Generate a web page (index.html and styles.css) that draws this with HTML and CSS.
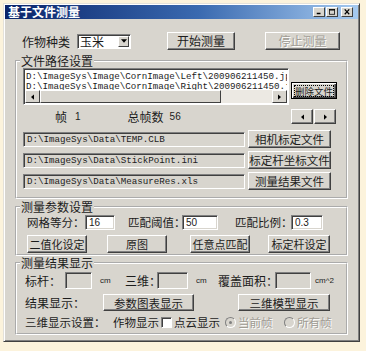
FILE: index.html
```html
<!DOCTYPE html>
<html lang="zh-CN">
<head>
<meta charset="UTF-8" />
<title>基于文件测量</title>
<link rel="stylesheet" href="styles.css">
</head>
<body>

<!-- Dialog window -->
<div class="window">
  <div class="titlebar">
    <span class="title">基于文件测量</span>
    <div class="caption-btns">
      <span class="cap-btn"><svg viewBox="0 0 10 8"><rect x="2" y="5" width="5" height="2" fill="#000"/></svg></span>
      <span class="cap-btn"><svg viewBox="0 0 10 8"><rect x="1.5" y="0.5" width="7" height="6.5" fill="none" stroke="#000"/><rect x="1.5" y="0.5" width="7" height="1.5" fill="#000"/></svg></span>
      <span class="cap-btn cap-close"><svg viewBox="0 0 10 8"><path d="M2 0.5 L8 7 M8 0.5 L2 7" stroke="#000" stroke-width="1.6"/></svg></span>
    </div>
  </div>

  <div class="client">
    <!-- Crop type and start / stop -->
    <div class="row-top">
      <span class="label lbl-crop">作物种类</span>
      <div class="combo">
        <span class="combo-text">玉米</span>
        <span class="combo-arrow"><svg viewBox="0 0 7 4"><path d="M0 0 H7 L3.5 4 Z" fill="#000"/></svg></span>
      </div>
      <button class="btn btn-start">开始测量</button>
      <button class="btn btn-stop" disabled>停止测量</button>
    </div>

    <!-- File paths -->
    <fieldset class="group group-path">
      <legend>文件路径设置</legend>
      <div class="list-row">
        <div class="listbox">
          <div class="list-lines">
            <div>D:\ImageSys\Image\CornImage\Left\200906211450.jpg</div>
            <div>D:\ImageSys\Image\CornImage\Right\200906211450.jpg</div>
          </div>
          <div class="hscroll">
            <span class="sb-btn"><svg viewBox="0 0 4 7"><path d="M4 0 V7 L0 3.5 Z" fill="#000"/></svg></span>
            <span class="sb-thumb"></span>
            <span class="sb-track"></span>
            <span class="sb-btn"><svg viewBox="0 0 4 7"><path d="M0 0 V7 L4 3.5 Z" fill="#000"/></svg></span>
          </div>
        </div>
        <button class="btn btn-delete"><span class="focus-rect">删除文件</span></button>
      </div>

      <div class="frame-row">
        <span class="label lbl-frame">帧</span>
        <span class="label lbl-frame-no">1</span>
        <span class="label lbl-total">总帧数</span>
        <span class="label lbl-total-no">56</span>
        <div class="frame-nav">
          <button class="btn btn-arrow"><svg viewBox="0 0 4 7"><path d="M4 0 V7 L0 3.5 Z" fill="#000"/></svg></button>
          <button class="btn btn-arrow"><svg viewBox="0 0 4 7"><path d="M0 0 V7 L4 3.5 Z" fill="#000"/></svg></button>
        </div>
      </div>

      <div class="path-row">
        <div class="edit edit-path">D:\ImageSys\Data\TEMP.CLB</div>
        <button class="btn btn-path">相机标定文件</button>
      </div>
      <div class="path-row">
        <div class="edit edit-path">D:\ImageSys\Data\StickPoint.ini</div>
        <button class="btn btn-path">标定杆坐标文件</button>
      </div>
      <div class="path-row">
        <div class="edit edit-path">D:\ImageSys\Data\MeasureRes.xls</div>
        <button class="btn btn-path">测量结果文件</button>
      </div>
    </fieldset>

    <!-- Measurement parameters -->
    <fieldset class="group group-param">
      <legend>测量参数设置</legend>
      <div class="param-row">
        <span class="label lbl-grid">网格等分：</span>
        <div class="edit edit-white edit-grid">16</div>
        <span class="label lbl-thresh">匹配阈值：</span>
        <div class="edit edit-white edit-thresh">50</div>
        <span class="label lbl-ratio">匹配比例：</span>
        <div class="edit edit-white edit-ratio">0.3</div>
      </div>
      <div class="param-btns">
        <button class="btn btn-p1">二值化设定</button>
        <button class="btn btn-p2">原图</button>
        <button class="btn btn-p3">任意点匹配</button>
        <button class="btn btn-p4">标定杆设定</button>
      </div>
    </fieldset>

    <!-- Results -->
    <fieldset class="group group-result">
      <legend>测量结果显示</legend>
      <div class="result-row">
        <span class="label lbl-pole">标杆：</span>
        <div class="edit edit-pole"></div>
        <span class="unit unit-1">cm</span>
        <span class="label lbl-3d">三维：</span>
        <div class="edit edit-3d"></div>
        <span class="unit unit-2">cm</span>
        <span class="label lbl-area">覆盖面积：</span>
        <div class="edit edit-area"></div>
        <span class="unit unit-3">cm^2</span>
      </div>
      <div class="show-row">
        <span class="label lbl-show">结果显示：</span>
        <button class="btn btn-chart">参数图表显示</button>
        <button class="btn btn-model">三维模型显示</button>
      </div>
      <div class="opt-row">
        <span class="label lbl-opt">三维显示设置：</span>
        <span class="label lbl-crop-show">作物显示</span>
        <span class="check"></span>
        <span class="label lbl-cloud">点云显示</span>
        <span class="radio radio-on"></span>
        <span class="label dim lbl-cur">当前帧</span>
        <span class="radio"></span>
        <span class="label dim lbl-all">所有帧</span>
      </div>
    </fieldset>
  </div>
</div>

</body>
</html>
```

FILE: styles.css
```css
/* Base */
* {
  box-sizing: border-box;
}
body {
  margin: 0;
  background-color: #fcf3dc;
  font-family: "Noto Sans CJK SC", "DejaVu Sans", sans-serif;
  font-size: 12px;
  line-height: 13px;
  color: #1c1c1c;
}
/* Window frame */
.window {
  margin: 3px 0 0 3px;
  width: 357px;
  background-color: #d8d5ce;
  border: 1px solid;
  border-color: #e4e1da #404040 #404040 #e4e1da;
  box-shadow: inset 1px 1px 0 #fff, inset -1px -1px 0 #808080;
  padding: 1px;
}
.titlebar {
  height: 14px;
  display: flex;
  align-items: center;
  justify-content: space-between;
  background: linear-gradient(to right, #0a246a, #3a6ab0 55%, #a6caf0);
  padding: 0 5px 0 3px;
}
.title {
  color: #fff;
  font-weight: bold;
  font-size: 12px;
  line-height: 14px;
}
.caption-btns {
  display: flex;
  gap: 1px;
}
.cap-btn {
  width: 12px;
  height: 10px;
  background-color: #d8d5ce;
  border: 1px solid;
  border-color: #fff #404040 #404040 #fff;
  display: flex;
  align-items: center;
  justify-content: center;
}
.cap-btn svg {
  width: 8px;
  height: 6px;
}
.cap-close {
  margin-left: 2px;
}
.client {
  padding: 13px 10px 5px 10px;
}
/* Common controls */
.label {
  white-space: nowrap;
  flex: none;
}
.dim {
  color: #a09c94;
  text-shadow: 1px 1px 0 #fff;
}
.btn {
  font-family: inherit;
  font-size: 11px;
  line-height: 12px;
  color: #1c1c1c;
  background-color: #d8d5ce;
  border: 1px solid;
  border-color: #fff #404040 #404040 #fff;
  box-shadow: inset -1px -1px 0 #808080;
  padding: 0;
  margin: 0;
  flex: none;
  white-space: nowrap;
}
.btn:disabled {
  color: #a09c94;
  text-shadow: 1px 1px 0 #fff;
}
.edit {
  flex: none;
  height: 15px;
  border: 1px solid;
  border-color: #808080 #fff #fff #808080;
  box-shadow: inset 1px 1px 0 #404040, inset -1px -1px 0 #d8d5ce;
  background-color: #d8d5ce;
  overflow: hidden;
  white-space: nowrap;
}
.edit-white {
  background-color: #fff;
  font-family: "Liberation Sans", sans-serif;
  font-size: 10px;
  line-height: 13px;
  padding-left: 3px;
}
/* Top row */
.row-top {
  display: flex;
  align-items: center;
  height: 18px;
}
.lbl-crop {
  margin-left: 7px;
  width: 55px;
}
.combo {
  width: 54px;
  height: 15px;
  display: flex;
  background-color: #fff;
  border: 1px solid;
  border-color: #808080 #fff #fff #808080;
  box-shadow: inset 1px 1px 0 #404040;
  padding: 1px 1px 1px 2px;
}
.combo-text {
  flex: 1;
  line-height: 12px;
}
.combo-arrow {
  width: 11px;
  background-color: #d8d5ce;
  border: 1px solid;
  border-color: #fff #404040 #404040 #fff;
  display: flex;
  align-items: center;
  justify-content: center;
}
.combo-arrow svg {
  width: 6px;
  height: 4px;
}
.btn-start {
  margin-left: 36px;
  width: 68px;
  height: 18px;
  font-size: 12px;
}
.btn-stop {
  margin-left: 30px;
  width: 75px;
  height: 18px;
  font-size: 12px;
}
/* Group boxes */
.group {
  margin: 0;
  border: 2px groove #fff;
  min-width: 0;
}
.group legend {
  padding: 0 1px;
  margin-left: -3px;
  line-height: 12px;
}
.group-path {
  margin-top: 5px;
  padding: 1px 10px 7px 6px;
}
.group-param {
  margin-top: 2px;
  padding: 2px 10px 1px 6px;
}
.group-result {
  margin-top: 1px;
  padding: 1px 10px 4px 6px;
}
/* Path list */
.list-row {
  display: flex;
  align-items: flex-start;
}
.listbox {
  width: 266px;
  height: 37px;
  background-color: #fff;
  border: 1px solid;
  border-color: #808080 #fff #fff #808080;
  box-shadow: inset 1px 1px 0 #404040;
  padding: 1px;
  display: flex;
  flex-direction: column;
  flex: none;
}
.list-lines {
  flex: 1;
  overflow: hidden;
  font-family: "Liberation Mono", monospace;
  font-size: 9.2px;
  line-height: 10px;
  padding: 2px 0 0 1px;
  white-space: nowrap;
}
.hscroll {
  height: 13px;
  display: flex;
}
.sb-btn {
  width: 15px;
  background-color: #d8d5ce;
  border: 1px solid;
  border-color: #fff #404040 #404040 #fff;
  display: flex;
  align-items: center;
  justify-content: center;
}
.sb-btn svg {
  width: 3px;
  height: 6px;
}
.sb-thumb {
  width: 181px;
  background-color: #d8d5ce;
  border: 1px solid;
  border-color: #fff #404040 #404040 #fff;
}
.sb-track {
  flex: 1;
  background-color: #ece9e3;
}
.btn-delete {
  margin: 14px 0 0 2px;
  width: 46px;
  height: 17px;
  border: 1px solid #000;
  box-shadow: inset 1px 1px 0 #fff, inset -1px -1px 0 #404040, inset -2px -2px 0 #808080;
  padding: 3px;
  font-size: 9.5px;
}
.focus-rect {
  display: block;
  outline: 1px dotted #000;
  line-height: 10px;
}
/* Frame counter */
.frame-row {
  display: flex;
  align-items: center;
  margin-top: 4px;
  height: 15px;
}
.lbl-frame {
  margin-left: 32px;
}
.lbl-frame-no {
  margin-left: 8px;
  font-family: "Liberation Sans", sans-serif;
  font-size: 10px;
}
.lbl-total {
  margin-left: 47px;
}
.lbl-total-no {
  margin-left: 6px;
  font-family: "Liberation Sans", sans-serif;
  font-size: 10px;
}
.frame-nav {
  margin-left: auto;
  display: flex;
  gap: 1px;
}
.btn-arrow {
  width: 22px;
  height: 15px;
  display: flex;
  align-items: center;
  justify-content: center;
}
.btn-arrow svg {
  width: 3px;
  height: 6px;
}
/* Path rows */
.path-row {
  display: flex;
  align-items: center;
  height: 18px;
  margin-top: 3px;
}
.frame-row + .path-row {
  margin-top: 6px;
}
.edit-path {
  width: 222px;
  font-family: "Liberation Mono", monospace;
  font-size: 9.2px;
  line-height: 13px;
  padding-left: 3px;
}
.btn-path {
  margin-left: 3px;
  width: 83px;
  height: 18px;
  font-size: 11.5px;
}
/* Parameter rows */
.param-row {
  display: flex;
  align-items: center;
  height: 15px;
}
.param-row .label {
  font-size: 11.5px;
}
.lbl-grid {
  margin-left: 4px;
  width: 58px;
}
.edit-grid {
  width: 30px;
}
.lbl-thresh {
  margin-left: 13px;
  width: 54px;
}
.edit-thresh {
  width: 36px;
}
.lbl-ratio {
  margin-left: 17px;
  width: 56px;
}
.edit-ratio {
  width: 32px;
}
.param-btns {
  display: flex;
  margin-top: 5px;
  height: 18px;
}
.param-btns .btn {
  height: 18px;
}
.btn-p1 {
  margin-left: 4px;
  width: 60px;
}
.btn-p2 {
  margin-left: 20px;
  width: 60px;
}
.btn-p3 {
  margin-left: 23px;
  width: 60px;
}
.btn-p4 {
  margin-left: 18px;
  width: 62px;
}
/* Result rows */
.result-row {
  display: flex;
  align-items: center;
  height: 17px;
  margin-top: 2px;
}
.result-row .edit {
  height: 17px;
}
.unit {
  font-family: "Liberation Sans", sans-serif;
  font-size: 8px;
  flex: none;
}
.lbl-pole {
  margin-left: 2px;
  width: 40px;
}
.edit-pole {
  width: 27px;
}
.unit-1 {
  margin-left: 8px;
  width: 25px;
}
.lbl-3d {
  width: 32px;
}
.edit-3d {
  width: 31px;
}
.unit-2 {
  margin-left: 8px;
  width: 22px;
}
.lbl-area {
  width: 57px;
}
.edit-area {
  width: 36px;
}
.unit-3 {
  margin-left: 4px;
}
.show-row {
  display: flex;
  align-items: center;
  height: 17px;
  margin-top: 5px;
}
.lbl-show {
  margin-left: 2px;
  width: 78px;
}
.btn-chart {
  width: 91px;
  height: 17px;
  font-size: 11.5px;
}
.btn-model {
  margin-left: 44px;
  width: 92px;
  height: 17px;
  font-size: 11.5px;
}
.opt-row {
  display: flex;
  align-items: center;
  height: 13px;
  margin-top: 5px;
}
.opt-row .label {
  font-size: 11.5px;
}
.lbl-opt {
  margin-left: 2px;
  width: 88px;
}
.lbl-crop-show {
  width: 48px;
}
.check {
  flex: none;
  width: 11px;
  height: 11px;
  background-color: #fff;
  border: 1px solid;
  border-color: #808080 #fff #fff #808080;
  box-shadow: inset 1px 1px 0 #404040;
}
.lbl-cloud {
  margin-left: 2px;
  width: 49px;
}
.radio {
  flex: none;
  width: 11px;
  height: 11px;
  border-radius: 50%;
  background-color: #d8d5ce;
  border: 1px solid;
  border-color: #808080 #fff #fff #808080;
  margin-left: 2px;
  display: flex;
  align-items: center;
  justify-content: center;
}
.radio-on::after {
  content: "";
  width: 3px;
  height: 3px;
  border-radius: 50%;
  background-color: #808080;
}
.lbl-cur {
  margin-left: 2px;
  width: 44px;
}
.lbl-all {
  margin-left: 2px;
}
```
